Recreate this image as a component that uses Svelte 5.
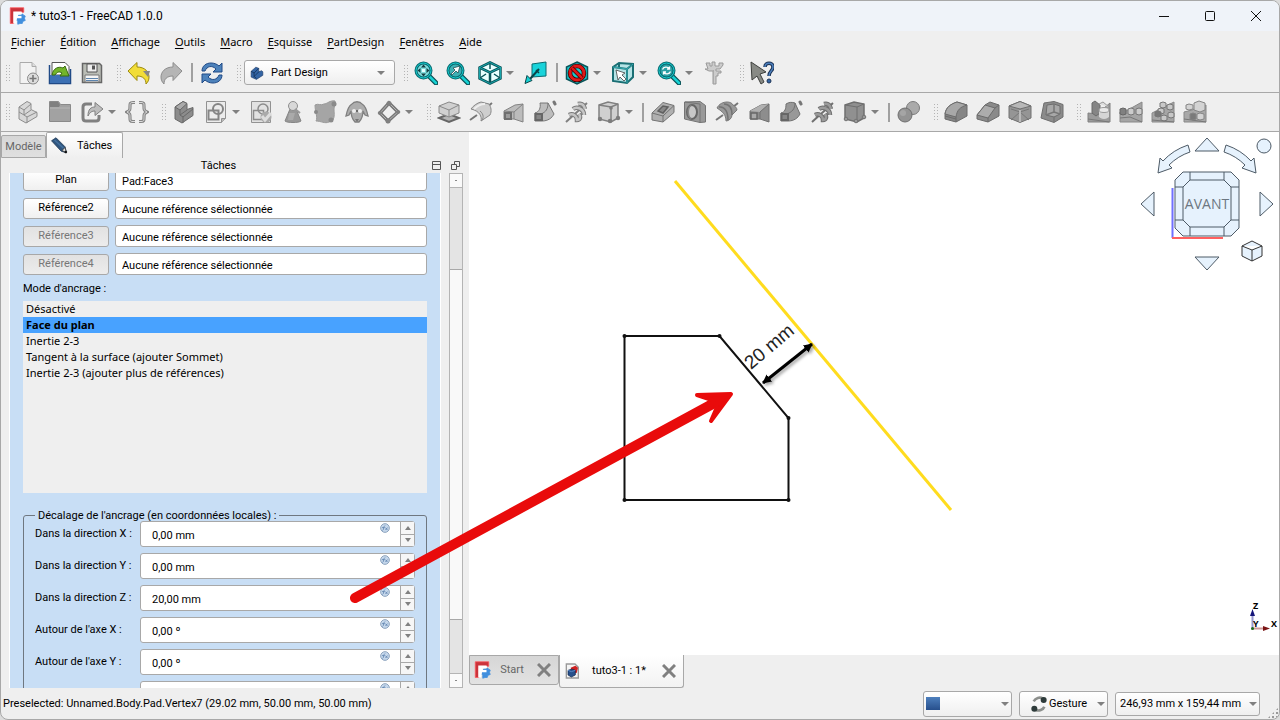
<script>
  // Inner markup of the 24x24 icons, keyed by command name
  const icons = {
    logo: `<path d="M3 1h18v6H10v3H8v12H3z" fill="#cb333b" stroke="#ff585d"/><path d="M12 13h2v-2h4l1-2 2 2 2 1-1 3 1 3-3 1-1 3h-3l-3 1v-5h-2z" fill="#418fde" stroke="#418fde"/><path d="M7 6h11l1 3-6 1v2h5v3h-6l-1 7H7z" fill="#fff"/><path d="M14 16h5l-2 5h-4z" fill="#418fde"/>`,
    newDoc: `<path d="M4 1.500h12l4 4V22.500H4z" fill="#f2f2f2" stroke="#aaa"/><path d="M16 1.500v4h4" fill="#ddd" stroke="#aaa"/><circle cx="17" cy="17.500" r="5.500" fill="#ddd" stroke="#8a8a8a"/><path d="M17 14v7M13.500 17.500h7" stroke="#777" stroke-width="1.600"/>`,
    open: `<path d="M4 1.500h13l4 4V14H4z" fill="#fff" stroke="#555"/><path d="M1.500 4v18.500h21V8" fill="none" stroke="#204a87" stroke-width="1.500"/><path d="M2 14h20v8H2z" fill="#3c70b4"/><path d="M4 14c1-7 7-9 11-7l2-2 4 10H12l2-3c-3-2-5-1-7 2z" fill="#73b52a" stroke="#3a6b12"/>`,
    save: `<path d="M2.500 2.500h17l2 2v17h-19z" fill="#babdb6" stroke="#666" stroke-width="1.500"/><path d="M7 3h10v8H7z" fill="#eee" stroke="#555"/><path d="M12 4.500h3v4h-3z" fill="#555"/><path d="M5 14h14v7H5z" fill="#f4f4f4" stroke="#777"/><path d="M6 17.500h12M6 19.500h12" stroke="#5d84ad"/>`,
    undo: `<path d="M1 10 10 1.500V6c8 0 12 5 12 10 0 3-1 5-3 7 0-5-3-8-9-8v4.500z" fill="#f2dd38" stroke="#9c8a10"/><path d="M16 10h7l-2 6" fill="#888"/>`,
    redo: `<path d="M23 10 14 1.500V6C6 6 2 11 2 16c0 3 1 5 3 7 0-5 3-8 9-8v4.500z" fill="#b5b5b5" stroke="#8d8d8d"/>`,
    refresh: `<path d="M2 10C2 5 6 2 11 2c3 0 6 1 8 3l3-3v9h-9l3-3c-4-4-9-3-11 2z" fill="#4d82bb" stroke="#204a87"/><path d="M22 14c0 5-4 8-9 8-3 0-6-1-8-3l-3 3v-9h9l-3 3c4 4 9 3 11-2z" fill="#4d82bb" stroke="#204a87"/>`,
    partBlue: `<path d="M2 9 10 2l5 2v6l5-2 2 2v6l-11 7-9-4z" fill="#3465a4" stroke="#16345f"/><path d="M2 9l5 3v6l4 3M7 12l8-8M7 18l8-8" fill="none" stroke="#0b1f3c"/>`,
    zoomFit: `<path d="m15 15 7 7" stroke="#0b4f54" stroke-width="5" stroke-linecap="round"/><path d="m15 15 7 7" stroke="#16d0d2" stroke-width="2.500" stroke-linecap="round"/><circle cx="9.500" cy="9.500" r="7.500" fill="#7fdcdc" stroke="#0a6a70" stroke-width="3"/><circle cx="9.500" cy="9.500" r="7.500" fill="none" stroke="#16d0d2"/><path d="M9.500 3.500 12 6.500H7zM9.500 15.500l2.500-3H7zM3.500 9.500l3-2.500v5zM15.500 9.500l-3-2.500v5z" fill="#173f43"/><path d="M8 8h3v3H8z" fill="#e8ffff"/>`,
    zoomSel: `<path d="m15 15 7 7" stroke="#0b4f54" stroke-width="5" stroke-linecap="round"/><path d="m15 15 7 7" stroke="#16d0d2" stroke-width="2.500" stroke-linecap="round"/><circle cx="9.500" cy="9.500" r="7.500" fill="#3fb0b4" stroke="#0a6a70" stroke-width="3"/><circle cx="9.500" cy="9.500" r="7.500" fill="none" stroke="#16d0d2"/><path d="m5 13 4-4-2-2 7-2-2 7-2-2-4 4z" fill="#fff" stroke="#173f43" stroke-width=".7"/>`,
    isoCube: `<path d="m12 1.500 10.500 5v11L12 22.500l-10.500-5v-11z" fill="#e9ffff" stroke="#0a5459" stroke-width="2.500"/><path d="m1.500 6.500 10.500 5 10.500-5M12 11v12" fill="none" stroke="#0a5459" stroke-width="2.500"/><path d="M12 2v6M2 17l6-4m14 4-6-4" stroke="#0a5459" stroke-width="1.500"/><path d="m12 1.500 10.500 5v11L12 22.500l-10.500-5v-11zm-10.500 5 10.500 5 10.500-5" fill="none" stroke="#1cc9ce" stroke-width=".7"/>`,
    alignView: `<path d="m8 3 14-2v14l-14 1z" fill="#19d3da" stroke="#0a6a70"/><path d="m15 8-9 10" stroke="#0a4448" stroke-width="2"/><path d="m1 22.500 2-8 5 5z" fill="#16d0d2" stroke="#0a4448"/><path d="m12 9 3 3" stroke="#0a4448" stroke-width="1.500"/>`,
    drawStyle: `<path d="m12 1 10.500 5v12L12 23 1.500 18V6z" fill="#19c9cd" stroke="#0a5459" stroke-width="1.500"/><circle cx="12" cy="12" r="7" fill="none" stroke="#400" stroke-width="4.500"/><circle cx="12" cy="12" r="7" fill="none" stroke="#e01818" stroke-width="3"/><path d="m7 7 10 10" stroke="#400" stroke-width="4"/><path d="m7 7 10 10" stroke="#e01818" stroke-width="2.500"/>`,
    selBox: `<path d="m2 6 6-4 14 1v13l-6 6-14-2z" fill="#b6e4e6" stroke="#1a6f74" stroke-width="2"/><path d="m2 6 14 2 6-5m-6 5v14M8 2v5" fill="none" stroke="#1a6f74" stroke-width="2"/><path d="m2 6 14 2 6-5m-6 5v14" fill="none" stroke="#3fc3c8" stroke-width=".7"/><path d="m5 9 9 3-3 2 4 4-2 2-4-4-2 3z" fill="#fff" stroke="#444" stroke-width=".8"/>`,
    zoomSync: `<path d="m15 15 7 7" stroke="#0b4f54" stroke-width="5" stroke-linecap="round"/><path d="m15 15 7 7" stroke="#16d0d2" stroke-width="2.500" stroke-linecap="round"/><circle cx="9.500" cy="9.500" r="7.500" fill="#2d9fa4" stroke="#0a6a70" stroke-width="3"/><circle cx="9.500" cy="9.500" r="7.500" fill="none" stroke="#16d0d2"/><path d="M5.500 8.500c1-3 5-3 7-1V5.500m0 2.500H10M13.500 10.500c-1 3-5 3-7 1v2m0-2.500H9" fill="none" stroke="#fff" stroke-width="1.300"/>`,
    caliper: `<path d="M3 2h4v3h2V1h3v4h4V2h4v2l-3 4h-4v2h5v2h-3v3h-2v8h-3V10H6L2 8h3z" fill="#ccc" stroke="#999"/><path d="M10.500 9v13" stroke="#aaa"/>`,
    whatsThis: `<path d="m1 1 15 10-6 2 4 8-3 2-4-8-5 4z" fill="#888a85" stroke="#3d3f3c"/><path d="M15 6c0-5 8-5 8 0 0 4-4 4-4 9" fill="none" stroke="#1c3355" stroke-width="3.500"/><path d="M15 6c0-5 8-5 8 0 0 4-4 4-4 9" fill="none" stroke="#4c7fbd" stroke-width="1.500"/><circle cx="19" cy="20" r="2" fill="#3465a4" stroke="#1c3355"/>`,
    body: `<path d="m3 7 8-5.500 4 2v6l6 3v4L10 23l-7-4z" fill="#d8d8d8" stroke="#8c8c8c"/><path d="m3 7 5 3 7-6M8 10v5l7-5m-7 5 3 2 10-5m-10 5v6M3 12l5 3" fill="none" stroke="#8c8c8c"/>`,
    group: `<path d="M1.500 1.500h9l2 3h10v17h-21z" fill="#a2a2a2" stroke="#8a8a8a"/><path d="M2 2h8l2 3-1 2H2z" fill="#808080"/><path d="M2 8h20" stroke="#b5b5b5"/>`,
    link: `<path d="M12 4H6C4 4 3 5 3 7v11c0 2 1 3 3 3h10c2 0 3-1 3-3v-3" fill="none" stroke="#808080" stroke-width="3"/><path d="M8 16c0-7 3-9 7-9V2.500l8 6.500-8 6.500V11c-3 0-5 1-7 5z" fill="#bdbdbd" stroke="#808080"/>`,
    braces: `<path d="M10 2.500H8c-3 0-3 1-3 4s0 4-3 5.500c3 1.500 3 2.500 3 5.500s0 4 3 4h2M14 2.500h2c3 0 3 1 3 4s0 4 3 5.500c-3 1.500-3 2.500-3 5.500s0 4-3 4h-2" fill="none" stroke="#858585" stroke-width="3.200"/><path d="M10 2.500H8c-3 0-3 1-3 4s0 4-3 5.500c3 1.500 3 2.500 3 5.500s0 4 3 4h2M14 2.500h2c3 0 3 1 3 4s0 4 3 5.500c-3 1.500-3 2.500-3 5.500s0 4-3 4h-2" fill="none" stroke="#ddd"/>`,
    bodyDark: `<path d="m3 7 8-5.500 4 2v6l6-2v8L10 23l-7-4z" fill="#8c8c8c" stroke="#686868"/><path d="m3 7 8-5.500 4 2L8 10z" fill="#aaa" stroke="#686868"/><path d="M8 10v5l3 2v6M8 15l7-5m-4 7 10-8" fill="none" stroke="#686868"/>`,
    sketch: `<path d="M2.500 1.500h19v17l-4 4h-15z" fill="#ececec" stroke="#929292"/><path d="M4.500 10.500h10v9h-10z" fill="none" stroke="#858585" stroke-width="2"/><circle cx="14" cy="9" r="5" fill="none" stroke="#858585" stroke-width="2"/><path d="M21.500 18.500h-4v4" fill="#bbb" stroke="#929292"/>`,
    sketchCheck: `<path d="M2.500 1.500h19v21h-19z" fill="#e2e2e2" stroke="#929292"/><path d="M4.500 10.500h10v9h-10z" fill="none" stroke="#8c8c8c" stroke-width="1.500"/><circle cx="14" cy="9" r="5" fill="none" stroke="#8c8c8c" stroke-width="1.500"/><circle cx="17" cy="17" r="5.500" fill="#aaa"/><path d="m13 16 3 4 6-7" fill="none" stroke="#ddd" stroke-width="3"/>`,
    mapSketch: `<path d="m9 9-5 12c2 2 14 2 16 0L15 9z" fill="#989898" stroke="#858585"/><circle cx="12" cy="6" r="4.500" fill="#d8d8d8" stroke="#8e8e8e"/><path d="m14 9 5 4" stroke="#999" stroke-width="2"/><path d="M8 13h6l-2 7H7z" fill="#aaa"/>`,
    binder: `<path d="M2 5c3-2 6 1 9-1 3 0 6-4 11-3 1 3-1 5-1 8 0 4 1 7-1 11l-4 2c-4 2-8-1-13-1 2-4-1-9-1-16z" fill="#a5a5a5" stroke="#9a9a9a"/><circle cx="3" cy="12" r="2" fill="#888"/><circle cx="21" cy="4" r="2.500" fill="#8a8a8a"/><circle cx="18" cy="20" r="2.500" fill="#8a8a8a"/>`,
    clone: `<path d="M7 4c2-3 8-3 10 0 4 2 5 7 6 12l-3-1-2-4c0 4-1 8-4 11h-4c-3-3-4-7-4-11l-2 4-3 1C2 11 3 6 7 4z" fill="#adadad" stroke="#808080" stroke-width="1.300"/><circle cx="9" cy="11" r="2" fill="#eee"/><circle cx="15" cy="11" r="2" fill="#eee"/><circle cx="12" cy="11" r="1" fill="#555"/><path d="M10 19h4l-2 3z" fill="#777"/>`,
    diamond: `<path d="m12 3 9 9-10 9-8-8z" fill="none" stroke="#777" stroke-width="3.500"/><path d="m12 3 9 9-10 9-8-8z" fill="none" stroke="#b5b5b5"/><g fill="#808080"><circle cx="12" cy="3.500" r="2.500"/><circle cx="21" cy="12" r="2"/><circle cx="11" cy="21" r="2.500"/><circle cx="3" cy="13" r="2"/></g>`,
    pad: `<path d="m2 18 10-4 10 4-10 4z" fill="#b5b5b5" stroke="#666" stroke-width="2"/><path d="m2 6 10-4 10 3v8l-10 4-10-4z" fill="#d0d0d0" stroke="#888"/><path d="m2 6 10 4 10-5M12 10v7" fill="none" stroke="#888"/>`,
    revolve: `<path d="m1 20 7-5m10-8 5-4" stroke="#777" stroke-width="2"/><path d="M2 9c2-3 6-6 10-7l8 2c2 3 3 7 1 11l-9 6c1-4-1-10-10-12z" fill="#cecece" stroke="#888"/><path d="M5 9c3-3 6-5 11-5" fill="none" stroke="#eee" stroke-width="2"/><path d="M12 21c3-2 3-7-1-10" fill="none" stroke="#888"/>`,
    loft: `<path d="m3 11 11-6 8-1v18L13 19H3z" fill="#bcbcbc" stroke="#828282"/><path d="M13 19v-7l9-8M3 11l10 1" fill="none" stroke="#828282"/><path d="M4 13h6v6H4z" fill="#9b9b9b" stroke="#6f6f6f" stroke-width="2"/>`,
    pipe: `<path d="M7 3h8l6 11c-2 4-6 7-12 7H2v-8c4-1 6-5 5-10z" fill="#bdbdbd" stroke="#777"/><path d="M15 3c0 6-2 9-7 11m1 7c1-5-1-7-7-8" fill="none" stroke="#777"/><path d="M2.500 14H9v6H2.500z" fill="#858585" stroke="#666" stroke-width="2"/><path d="m21 2 1 2" stroke="#777" stroke-width="3" stroke-linecap="round"/>`,
    helix: `<path d="M1 22 22 3" stroke="#808080" stroke-width="2"/><path d="M4 15c4-2 8 1 8 5 3 0 4-3 2-6M8 9c4-3 11 0 11 6M13 4c4-1 6 1 7 5" fill="none" stroke="#7c7c7c" stroke-width="4.500"/><path d="M4 15c4-2 8 1 8 5 3 0 4-3 2-6M8 9c4-3 11 0 11 6M13 4c4-1 6 1 7 5" fill="none" stroke="#c5c5c5" stroke-width="2.500"/>`,
    primitive: `<path d="m2 5 9-3 10 2v14l-7 4-12-3z" fill="#d0d0d0" stroke="#808080" stroke-width="1.500"/><path d="m2 5 12 2 7-3m-7 3v15" fill="none" stroke="#808080" stroke-width="1.500"/><g fill="#7c7c7c"><circle cx="14" cy="8" r="1.800"/><circle cx="21" cy="18" r="2.200"/><circle cx="13" cy="21" r="2.200"/><circle cx="3" cy="19" r="2.200"/></g>`,
    pocket: `<path d="m1 13 11-10.500 11 3v7L12 22 1 20z" fill="#b0b0b0" stroke="#737373"/><path d="m1 13 11 3 11-10.500M12 16v6" fill="none" stroke="#737373"/><path d="m7 11 5-5 5 1-5 6z" fill="#888" stroke="#606060" stroke-width="1.500"/>`,
    hole: `<path d="M1.500 2 17 1.500l5.500 4V22L17 22.500 1.500 19z" fill="#999" stroke="#747474"/><path d="M17 4v19M2 2l15 2" stroke="#747474"/><ellipse cx="9" cy="12" rx="5" ry="7" fill="#c7c7c7" stroke="#666" stroke-width="2"/><path d="M9 5c-4 3-4 11 0 14-6 0-6-14 0-14z" fill="#888"/>`,
    groove: `<path d="m1 20 7-5m10-8 5-4" stroke="#777" stroke-width="2"/><path d="M2 8c2-4 6-6 10-6 3 0 5 1 6 3 2 1 4 3 4 5l-5 5c0 3-3 6-6 6 0-6-3-9-9-13z" fill="#999" stroke="#7a7a7a"/><path d="M4 7c6-1 9 5 9 13M9 4c5 0 8 4 8 11" fill="none" stroke="#737373" stroke-width="1.500"/>`,
    loftDark: `<path d="m3 11 11-6 8-1v18L13 19H3z" fill="#8d8d8d" stroke="#707070"/><path d="M3 11 14 5l8-1-9 8z" fill="#b1b1b1"/><path d="M13 19v-7l9-8" fill="none" stroke="#707070"/><path d="M4 13h6v6H4z" fill="#aaa" stroke="#686868" stroke-width="1.500"/>`,
    pipeDark: `<path d="M7 4c3-2 6-2 9-1l5 11c-2 4-6 7-12 7H2v-8c4-1 5-4 5-9z" fill="#989898" stroke="#707070"/><path d="M16 3c0 6-3 9-8 11m1 7c1-5-1-7-7-8" fill="none" stroke="#707070"/><path d="M2.500 14H9v6H2.500z" fill="#868686" stroke="#666" stroke-width="2"/><path d="m21 2 1 2" stroke="#777" stroke-width="3" stroke-linecap="round"/>`,
    helixDark: `<path d="M1 22 22 3" stroke="#707070" stroke-width="2"/><path d="M4 15c4-2 8 1 8 5 3 0 4-3 2-6M8 9c4-3 11 0 11 6M13 4c4-1 6 1 7 5" fill="none" stroke="#6f6f6f" stroke-width="4.500"/><path d="M4 15c4-2 8 1 8 5 3 0 4-3 2-6M8 9c4-3 11 0 11 6M13 4c4-1 6 1 7 5" fill="none" stroke="#9a9a9a" stroke-width="2.500"/>`,
    primitiveDark: `<path d="m2 5 9-3 10 2v14l-7 4-12-3z" fill="#909090" stroke="#6f6f6f" stroke-width="1.500"/><path d="m2 5 12 2 7-3m-7 3v15" fill="none" stroke="#6f6f6f"/><g fill="#999" stroke="#737373"><circle cx="21" cy="17" r="1.800"/><circle cx="13" cy="21" r="1.800"/><circle cx="3" cy="19" r="1.800"/></g>`,
    boolean: `<circle cx="16" cy="8" r="6.500" fill="#aaa" stroke="#7c7c7c"/><circle cx="8" cy="15" r="7" fill="#939393" stroke="#6f6f6f"/><circle cx="6" cy="13" r="3" fill="#a5a5a5"/>`,
    fillet: `<path d="M1 14C2 7 7 4 13 2l10 3v11l-11 6-11-3z" fill="#858585" stroke="#6b6b6b"/><path d="M1 14C2 7 7 4 13 2l10 3c-7 2-10 5-11 12z" fill="#a8a8a8" stroke="#6b6b6b"/><path d="M12 17v5M1 16l11 3" stroke="#6b6b6b"/>`,
    chamfer: `<path d="m1 15 8-10 5-3 9 3v11l-11 6-11-3z" fill="#8a8a8a" stroke="#6b6b6b"/><path d="m1 15 8-10 10 3-7 10z" fill="#acacac" stroke="#6b6b6b"/><path d="m19 8 4-3m-11 13v4" stroke="#6b6b6b"/>`,
    draft: `<path d="m1 6 11-4.500L23 6v12l-11 4.500L1 18z" fill="#959595" stroke="#707070"/><path d="m1 6 11 3 11-3-11-4.500z" fill="#b8b8b8" stroke="#707070"/><path d="M12 9v13M3 9l9 3-9 8m18-11-9 3 9 8" fill="none" stroke="#777"/><path d="M12 10v12" stroke="#ccc" stroke-width="1.500"/>`,
    thickness: `<path d="m4 3 10-1.500 9 3V17l-9 5.500L1 18z" fill="#8b8b8b" stroke="#6e6e6e"/><path d="m7 5 7-1 6 2v8l-6 3-8-2z" fill="#a8a8a8" stroke="#6e6e6e"/><path d="M14 4v8l-8 3m8-3 6 2m-6 3v5" fill="none" stroke="#777" stroke-width="1.500"/>`,
    mirror: `<path d="m1 13 9 1 13-11v19H1z" fill="#9b9b9b" stroke="#808080"/><path d="m5 3 3-2 5 4v8l-4 3-4-3z" fill="#858585" stroke="#6b6b6b"/><path d="m12 4 4-2 6 5" fill="#ddd" stroke="#999"/><ellipse cx="17" cy="16" rx="5" ry="3" fill="#d5d5d5"/><path d="M12 10h10v7H12z" fill="#d5d5d5"/><ellipse cx="17" cy="10" rx="5" ry="2.500" fill="#e8e8e8" stroke="#9a9a9a"/><path d="m1 19 21 3" stroke="#777"/>`,
    linear: `<path d="m1 12 6-1 16-9v20H1z" fill="#a5a5a5" stroke="#888"/><path d="m1 9 3-1 3 1v5l-3 1-3-1z" fill="#808080" stroke="#666"/><path d="m9 9 3-1 3 1v5l-3 1-3-1zM17 9l3-1 3 1v5l-3 1-3-1z" fill="#ccc" stroke="#777"/><path d="m1 18 10-1 12 5" fill="none" stroke="#777"/>`,
    polar: `<path d="m1 13 6-3 16-8v20H1z" fill="#a5a5a5" stroke="#888"/><g fill="#c8c8c8" stroke="#777"><path d="m9 3 3-1 3 1v4l-3 1-3-1zM16 5l3-1 3 1v4l-3 1-3-1zM7 9l3-1 3 1v4l-3 1-3-1zM17 13l3-1 3 1v4l-3 1-3-1zM10 16l3-1 3 1v4l-3 1-3-1z"/><path d="m4 12 3-1 3 1v4l-3 1-3-1z" fill="#777"/></g><path d="m1 20 22 2" stroke="#777"/>`,
    multi: `<path d="m1 12 8-2 14-5v17H1z" fill="#a8a8a8" stroke="#888"/><g fill="#d3d3d3" stroke="#858585"><path d="m11 3 5-2 6 2v7l-5 2-6-2zM3 5l3-1 4 1v4l-4 1-3-1zM14 14l3-1 4 1v5l-4 1-3-1z"/><path d="m7 14 3-1 3 1v5l-3 1-3-1z" fill="#7a7a7a"/></g><path d="m1 19 22 3" stroke="#777"/>`,
    pencil: `<path d="m2 5 6-4 12 12 2 8-7-2z" fill="#2f567f" stroke="#17304d"/><path d="m6 4 12 11" stroke="#44719f" stroke-width="2"/><path d="m16 18 4-4 2 7z" fill="#ddd" stroke="#333"/><path d="m20 19 2 2" stroke="#111" stroke-width="3"/>`,
    docPart: `<path d="M3.500 1.500h13l5 5v16h-18z" fill="#f4f4f4" stroke="#999" stroke-width="2"/><path d="m10 7 7-3 4 3-2 8-7 1z" fill="#d02020"/><path d="m6 11 6-2 5 2v7l-6 3-5-3z" fill="#28518c" stroke="#11264a"/><path d="m6 11 5 2 6-2" fill="none" stroke="#5886c4" stroke-width="1.500"/>`,
    gesture: `<path d="M4 8c3-5 9-7 14-4M20 16c-2 5-8 7-13 5" fill="none" stroke="#8c8f8c" stroke-width="4"/><circle cx="19" cy="6" r="4.500" fill="#2e3b3a"/><circle cx="5" cy="19" r="4.500" fill="#2e3b3a"/>`,
    expr: `<circle cx="12" cy="12" r="10.500" fill="#c6d8ec" stroke="#7e97b5" stroke-width="2"/><path d="M6 18c3 0 3-12 6-12M5 11h6m2 0 5 6m0-6-5 6" fill="none" stroke="#5f83ae" stroke-width="2"/>`
  };

  const menus = ['Fichier', 'Édition', 'Affichage', 'Outils', 'Macro', 'Esquisse', 'PartDesign', 'Fenêtres', 'Aide'];

  // '|' is a group handle, '/' a separator, a trailing '+' adds a drop-down arrow
  const fileTools = '| newDoc open save | undo redo / refresh |'.split(' ');
  const viewTools = '| zoomFit zoomSel isoCube+ alignView / drawStyle+ selBox+ zoomSync+ caliper | whatsThis'.split(' ');
  const designTools = (
    '| body group link+ braces | bodyDark sketch+ sketchCheck mapSketch binder clone diamond+ ' +
    '| pad revolve loft pipe helix primitive+ / pocket hole groove loftDark pipeDark helixDark primitiveDark+ / boolean ' +
    '| fillet chamfer draft thickness | mirror linear polar multi'
  ).split(' ');

  let references = [
    { label: 'Plan', value: 'Pad:Face3' },
    { label: 'Référence2', value: 'Aucune référence sélectionnée' },
    { label: 'Référence3', value: 'Aucune référence sélectionnée', disabled: true },
    { label: 'Référence4', value: 'Aucune référence sélectionnée', disabled: true }
  ];

  const modes = [
    'Désactivé',
    'Face du plan',
    'Inertie 2-3',
    'Tangent à la surface (ajouter Sommet)',
    'Inertie 2-3 (ajouter plus de références)'
  ];
  let selectedMode = 'Face du plan';

  let offsets = [
    { label: 'Dans la direction X :', value: '0,00 mm' },
    { label: 'Dans la direction Y :', value: '0,00 mm' },
    { label: 'Dans la direction Z :', value: '20,00 mm' },
    { label: "Autour de l'axe X :", value: '0,00 º' },
    { label: "Autour de l'axe Y :", value: '0,00 º' },
    { label: '', value: '' }
  ];
</script>

{#snippet icon(name, size)}
  <svg class="icon" width={size} height={size} viewBox="0 0 24 24" fill="none" aria-hidden="true">{@html icons[name]}</svg>
{/snippet}

{#snippet tools(list)}
  {#each list as item}
    {#if item === '|'}
      <span class="handle"></span>
    {:else if item === '/'}
      <span class="separator"></span>
    {:else}
      <button class="tool" aria-label={item.replace('+', '')}>{@render icon(item.replace('+', ''), 24)}</button>
      {#if item.endsWith('+')}
        <button class="tool-menu" aria-label="Menu"><span class="caret"></span></button>
      {/if}
    {/if}
  {/each}
{/snippet}

<div class="window">
  <header class="titlebar">
    {@render icon('logo', 18)}
    <span class="title">* tuto3-1 - FreeCAD 1.0.0</span>
    <div class="window-buttons">
      <button aria-label="Réduire"><svg width="12" height="12"><path d="M1 6.500h10" stroke="#111" /></svg></button>
      <button aria-label="Agrandir"><svg width="12" height="12"><rect x="1.500" y="1.500" width="9" height="9" rx="1" fill="none" stroke="#111" /></svg></button>
      <button aria-label="Fermer"><svg width="12" height="12"><path d="m1 1 10 10M11 1 1 11" stroke="#111" /></svg></button>
    </div>
  </header>

  <nav class="menubar">
    {#each menus as menu}
      <button><u>{menu[0]}</u>{menu.slice(1)}</button>
    {/each}
  </nav>

  <div class="toolbar main">
    {@render tools(fileTools)}
    <label class="combo workbench">
      {@render icon('partBlue', 14)}
      <select aria-label="Atelier"><option>Part Design</option></select>
      <span class="caret"></span>
    </label>
    {@render tools(viewTools)}
  </div>
  <div class="toolbar">
    {@render tools(designTools)}
  </div>

  <div class="workspace">
    <aside class="side">
      <div class="side-tabs">
        <button class="side-tab">Modèle</button>
        <button class="side-tab active">{@render icon('pencil', 18)}Tâches</button>
      </div>
      <div class="dock-title">
        <span>Tâches</span>
        <button aria-label="Réduire le panneau"><svg width="9" height="9"><path d="M.5.500h8v8h-8zM1 3.500h7" fill="none" stroke="#555" /></svg></button>
        <button aria-label="Détacher"><svg width="9" height="9"><path d="M3.500 3V.500h5v5H6M.500 3.500h5v5h-5z" fill="none" stroke="#555" /></svg></button>
      </div>

      <div class="task-scroll">
        <div class="task-panel">
          <div class="references">
            {#each references as ref}
              <button class="ref-button" disabled={ref.disabled}>{ref.label}</button>
              <input class="ref-input" aria-label={ref.label} bind:value={ref.value} />
            {/each}
          </div>
          <p class="mode-label" id="mode-label">Mode d'ancrage :</p>
          <div class="modes" role="listbox" aria-labelledby="mode-label">
            {#each modes as mode}
              <button role="option" aria-selected={mode === selectedMode} class:selected={mode === selectedMode} on:click={() => (selectedMode = mode)}>{mode}</button>
            {/each}
          </div>
          <fieldset>
            <legend>Décalage de l'ancrage (en coordonnées locales) :</legend>
            {#each offsets as offset, i}
              <div class="offset">
                <label for="offset-{i}">{offset.label}</label>
                <div class="spin">
                  <input id="offset-{i}" bind:value={offset.value} />
                  <span class="expr">{@render icon('expr', 10)}</span>
                  <div class="spin-buttons">
                    <button aria-label="Augmenter"><span class="caret up"></span></button>
                    <button aria-label="Diminuer"><span class="caret"></span></button>
                  </div>
                </div>
              </div>
            {/each}
          </fieldset>
        </div>
        <div class="scrollbar">
          <span class="scroll-end"></span>
          <span class="scroll-thumb"></span>
          <span class="scroll-end"></span>
        </div>
      </div>
    </aside>

    <main class="document">
      <div class="viewport">
        <svg class="scene">
          <defs>
            <marker id="dim-end" viewBox="0 0 10 10" refX="9" refY="5" markerWidth="9" markerHeight="9" markerUnits="userSpaceOnUse" orient="auto-start-reverse">
              <path d="M0 0 10 5 0 10z" />
            </marker>
            <filter id="shadow" x="-20%" y="-20%" width="150%" height="150%">
              <feDropShadow dx="2" dy="2" stdDeviation="1.500" flood-opacity="0.35" />
            </filter>
          </defs>
          <path d="M206 49 482 378" stroke="#ffdc1e" stroke-width="3" />
          <path d="M155.500 204h95L319.500 286v82h-164z" fill="none" stroke="#111" stroke-width="2" />
          <g fill="#111">
            <circle cx="155.500" cy="204" r="2" /><circle cx="250.500" cy="204" r="2" /><circle cx="319.500" cy="286" r="2" />
            <circle cx="319.500" cy="368" r="2" /><circle cx="155.500" cy="368" r="2" />
          </g>
          <path d="M294 251 343 212" stroke="#000" stroke-width="3" marker-start="url(#dim-end)" marker-end="url(#dim-end)" filter="url(#shadow)" />
          <text class="dimension" transform="translate(282 238) rotate(-40)">20 mm</text>
        </svg>

        <svg class="navcube" width="140" height="140" fill="#e6f2fd" stroke="#4d5a66">
          <path d="M67 6 79 19H55zM67 138 79 125H55zM1 72l13-12v24zM133 72l-13-12v24z" />
          <path d="M48 13Q33 18 23 29l-3-3-2 15 14-5-3-3Q38 24 50 20z" />
          <path d="M86 13q15 5 25 16l3-3 2 15-14-5 3-3Q96 24 84 20z" />
          <circle cx="124" cy="14" r="7" />
          <path d="M43 40h48l8 8v48l-8 8H43l-8-8V48z" />
          <path d="M50 48h34l7 7v33l-7 7H50l-7-7V55z" />
          <path d="M50 40v8M84 40v8M50 95v9M84 95v9M35 55h8M35 88h8M91 55h8M91 88h8" />
          <path d="M32.500 56v50" stroke="#7070ff" stroke-width="2" /><path d="M32 106h51" stroke="#ff6060" stroke-width="2" />
          <text x="67" y="77" text-anchor="middle">AVANT</text>
          <path d="m102 114 10-5 10 5v10l-10 5-10-5zM102 114l10 4 10-4M112 118v11" stroke="#333" />
        </svg>

        <svg class="axes" width="32" height="34">
          <path d="M7.500 27V15" stroke="#9a9ad0" stroke-width="2" /><path d="M7.500 8 10 15H5z" fill="#15157a" />
          <path d="M8 27.500h12" stroke="#d09a9a" stroke-width="2" /><path d="m25 27.500-7-2.500v5z" fill="#7a1515" />
          <circle cx="7.500" cy="27.500" r="1.500" fill="#1b6a1b" />
          <text x="8" y="8">Z</text><text x="8" y="26">Y</text><text x="26" y="26">X</text>
        </svg>
      </div>

      <div class="doc-tabs">
        <div class="doc-tab">
          {@render icon('logo', 18)}
          <button class="doc-name">Start</button>
          <button class="close" aria-label="Fermer Start"><svg width="14" height="14"><path d="m1 1 12 12M13 1 1 13" stroke="#808080" stroke-width="3" /></svg></button>
        </div>
        <div class="doc-tab active">
          {@render icon('docPart', 16)}
          <button class="doc-name">tuto3-1 : 1*</button>
          <button class="close" aria-label="Fermer tuto3-1"><svg width="14" height="14"><path d="m1 1 12 12M13 1 1 13" stroke="#808080" stroke-width="3" /></svg></button>
        </div>
      </div>
    </main>
  </div>

  <footer class="statusbar">
    <span class="message">Preselected: Unnamed.Body.Pad.Vertex7 (29.02 mm, 50.00 mm, 50.00 mm)</span>
    <label class="combo status">
      <span class="swatch"></span>
      <select aria-label="Notifications"><option></option></select>
      <span class="caret"></span>
    </label>
    <label class="combo status gesture">
      {@render icon('gesture', 16)}
      <select aria-label="Navigation"><option>Gesture</option></select>
      <span class="caret"></span>
    </label>
    <label class="combo status size">
      <select aria-label="Dimensions"><option>246,93 mm x 159,44 mm</option></select>
      <span class="caret"></span>
    </label>
    <span class="grip"></span>
  </footer>

  <!-- Annotation pointing from the Z offset to the sketch -->
  <svg class="annotation" aria-hidden="true">
    <path d="M355 598 718 401" stroke="#e90b0b" stroke-width="10" stroke-linecap="round" />
    <path d="m731 394-34 1 15 5 5 7-6 14z" fill="#e90b0b" stroke="#e90b0b" stroke-width="4" stroke-linejoin="round" />
  </svg>
</div>

<style>
  :global(body) {
    margin: 0;
    background: #dcdcdc;
  }
  .window {
    position: relative;
    display: flex;
    flex-direction: column;
    height: 100vh;
    box-sizing: border-box;
    border: 1px solid #a8a8a8;
    border-radius: 8px;
    overflow: hidden;
    background: #efefef;
    color: #000;
    font-family: Roboto, 'Open Sans', sans-serif;
    font-size: 11px;
    line-height: 16px;
  }
  button, input, select {
    font: inherit;
    color: inherit;
    box-sizing: border-box;
    margin: 0;
  }
  button {
    padding: 0;
    border: none;
    background: none;
  }
  svg { display: block; flex: none; }

  .titlebar {
    display: flex;
    align-items: center;
    height: 30px;
    padding-left: 7px;
    background: #eff3f9;
  }
  .title { margin-left: 5px; font-size: 12px; }
  .window-buttons { display: flex; margin-left: auto; }
  .window-buttons button {
    display: flex;
    align-items: center;
    justify-content: center;
    width: 46px;
    height: 30px;
  }

  .menubar { display: flex; gap: 15px; height: 22px; padding: 0 10px; font-family: 'Noto Sans', sans-serif; }
  .menubar u { text-underline-offset: 2px; }

  /* Toolbars */
  .toolbar {
    display: flex;
    align-items: center;
    height: 38px;
    border-bottom: 1px solid #a8a8a8;
  }
  .toolbar.main { height: 39px; }
  .tool { display: flex; justify-content: center; flex: none; width: 32px; }
  .tool-menu { display: flex; flex: none; width: 13px; height: 24px; align-items: center; }
  .main .tool-menu { width: 14px; }
  .handle {
    flex: none;
    width: 7px;
    height: 18px;
    margin-left: 8px;
    background: radial-gradient(circle, #b4b4b4 1px, transparent 1px) 0 0 / 3px 3px;
    background-clip: content-box;
    box-sizing: border-box;
    padding-right: 1px;
  }
  .handle:first-child { margin-left: 4px; }
  .separator { flex: none; width: 2px; height: 19px; margin: 0 3px 0 4px; background: #a0a0a0; }
  .caret {
    flex: none;
    border: 4px solid transparent;
    border-top-color: #808080;
    border-bottom: none;
  }
  .caret.up { border-top: none; border-bottom: 4px solid #808080; }

  .combo {
    position: relative;
    display: flex;
    align-items: center;
    box-sizing: border-box;
    border: 1px solid #a8a8a8;
    border-radius: 3px;
    background: linear-gradient(#fff, #efefef);
  }
  .combo select {
    flex: 1;
    min-width: 0;
    appearance: none;
    border: none;
    background: none;
    padding: 0 0 0 7px;
  }
  .workbench { width: 151px; height: 25px; margin-left: 1px; padding: 0 9px 0 5px; }

  /* Task panel */
  .workspace { display: flex; flex: 1; min-height: 0; }
  .side { display: flex; flex-direction: column; width: 468px; flex: none; }
  .side-tabs { display: flex; align-items: flex-end; height: 26px; }
  .side-tab {
    height: 23px;
    min-width: 45px;
    padding: 0 3px;
    border: 1px solid #a8a8a8;
    border-radius: 2px 2px 0 0;
    background: linear-gradient(#d6d6d6, #e0e0e0);
    color: #666;
  }
  .side-tab.active {
    display: flex;
    align-items: center;
    gap: 9px;
    min-width: 77px;
    height: 26px;
    border-bottom: none;
    background: linear-gradient(#fff, #efefef);
    color: #000;
  }
  .dock-title { display: flex; align-items: center; gap: 10px; height: 15px; padding: 0 9px 0 14px; }
  .dock-title span { flex: 1; text-align: center; }
  .task-scroll { display: flex; flex: 1; min-height: 0; overflow: hidden; }
  .task-panel {
    flex: 1;
    align-self: flex-start;
    margin: 0 8px;
    padding: 0 13px;
    border: solid #fff;
    border-width: 0 1px;
    background: #c8def5;
  }
  .references {
    display: grid;
    grid-template-columns: 86px 1fr;
    align-items: center;
    gap: 6px;
    margin-top: -4px;
  }
  .ref-button {
    height: 21px;
    border: 1px solid #a8a8a8;
    border-radius: 3px;
    background: linear-gradient(#fff, #f0f0f0);
  }
  .ref-button:disabled { background: linear-gradient(#e2e2e2, #ececec); color: #777; }
  .ref-input {
    height: 22px;
    padding: 2px 6px 0;
    border: 1px solid #a8a8a8;
    border-radius: 3px;
    background: #fff;
  }
  .mode-label { margin: 6px 0 4px; }
  .modes { height: 192px; background: #efefef; font-family: 'Noto Sans', sans-serif; }
  .modes button { display: block; width: 100%; padding: 0 3px; text-align: left; }
  .modes .selected { background: #48a2ff; font-weight: bold; }
  fieldset {
    margin: 17px 0 0;
    padding: 0 11px 8px;
    min-width: 0;
    border: 1px solid #6f7780;
    border-radius: 3px;
  }
  legend { padding: 0 3px; height: 11px; line-height: 12px; }
  .offset { display: flex; align-items: center; height: 26px; margin-bottom: 6px; }
  .offset label { width: 105px; }
  .spin {
    position: relative;
    display: flex;
    flex: 1;
    height: 26px;
    box-sizing: border-box;
    border: 1px solid #a8a8a8;
    border-radius: 3px;
    background: #fff;
  }
  .spin input { flex: 1; min-width: 0; padding: 3px 11px 0; border: none; background: none; }
  .expr { position: absolute; top: 1px; right: 24px; }
  .spin-buttons { display: flex; flex-direction: column; width: 13px; border-left: 1px solid #a8a8a8; }
  .spin-buttons button { display: flex; flex: 1; align-items: center; justify-content: center; background: #f6f6f6; }
  .spin-buttons button + button { border-top: 1px solid #a8a8a8; }
  .spin-buttons .caret { border-left-width: 3px; border-right-width: 3px; }

  .scrollbar {
    display: flex;
    flex-direction: column;
    width: 14px;
    margin-right: 6px;
    box-sizing: border-box;
    border: 1px solid #b4b4b4;
    background: #e4e4e4;
  }
  .scroll-end { height: 13px; background: #fafafa; border-bottom: 1px solid #b4b4b4; }
  .scroll-end:last-child { margin-top: auto; border-top: 1px solid #b4b4b4; border-bottom: none; }
  .scroll-end::after { content: ''; display: block; width: 2px; height: 1px; margin: 6px auto; background: #888; }
  .scroll-thumb { height: 68%; margin-top: 81px; border: solid #a8a8a8; border-width: 1px 0; background: #f9f9f9; }

  /* 3D view */
  .document { display: flex; flex-direction: column; flex: 1; min-width: 0; }
  .viewport { position: relative; flex: 1; background: #fff; overflow: hidden; }
  .scene { width: 100%; height: 100%; }
  .dimension { font: 19px 'Liberation Sans', sans-serif; fill: #222; }
  .navcube { position: absolute; top: 0; right: -1px; }
  .navcube text { font: 14px 'Open Sans', sans-serif; fill: #6d7781; stroke: none; }
  .axes { position: absolute; right: 2px; bottom: 20px; overflow: visible; }
  .axes text { font: bold 9px 'Open Sans', sans-serif; }

  .doc-tabs { display: flex; align-items: flex-start; height: 33px; }
  .doc-tab {
    display: flex;
    align-items: center;
    box-sizing: border-box;
    width: 90px;
    height: 30px;
    padding: 0 7px 0 3px;
    border: 1px solid #a8a8a8;
    border-radius: 0 0 3px 3px;
    background: linear-gradient(#d6d6d6, #e2e2e2);
    color: #666;
  }
  .doc-tab.active {
    width: 125px;
    height: 33px;
    padding-left: 4px;
    border-top: none;
    background: linear-gradient(#fff, #f2f2f2);
    color: #000;
  }
  .doc-name { flex: 1; padding-right: 4px; }

  .statusbar { display: flex; align-items: center; gap: 7px; height: 31px; padding-left: 2px; }
  .message { flex: 1; white-space: nowrap; }
  .status { width: 89px; height: 26px; padding: 0 2px; }
  .gesture { padding-left: 11px; }
  .gesture select { padding-left: 2px; }
  .size { width: 145px; height: 24px; }
  .size select { padding-left: 2px; }
  .swatch { width: 14px; height: 13px; background: linear-gradient(#4d7fbd, #274f8c); }
  .grip {
    align-self: flex-end;
    width: 12px;
    height: 12px;
    background: radial-gradient(circle, #999 1px, transparent 1px) 0 0 / 4px 4px;
    clip-path: polygon(100% 0, 100% 100%, 0 100%);
  }

  .annotation {
    position: absolute;
    inset: -1px;
    width: 100%;
    height: 100%;
    overflow: visible;
    pointer-events: none;
  }
</style>
